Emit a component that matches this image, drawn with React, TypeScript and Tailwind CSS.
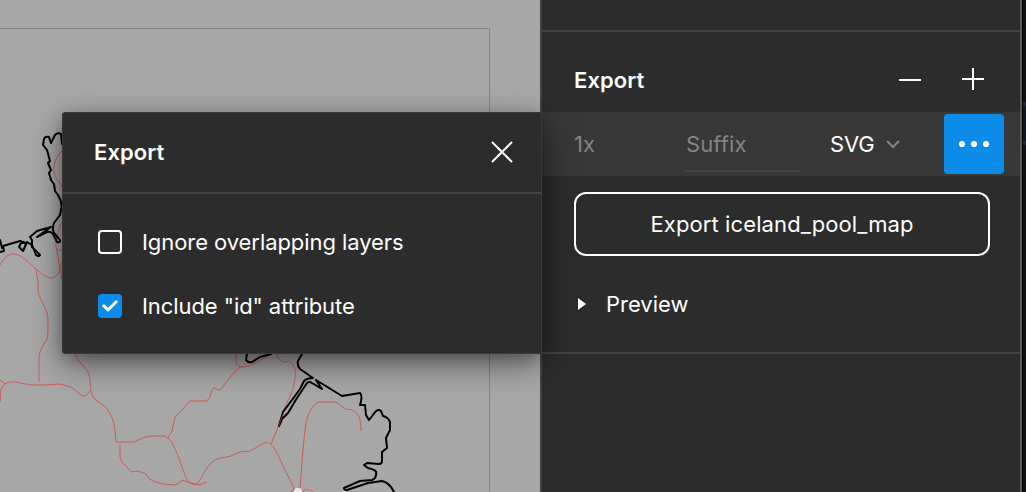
import React from "react";

const roads = [
  "M0 265C5 257 7 255 12 254C22 254 29 263 36 269C43 275 45 277 51 278C57 278 60 271 62 262",
  "M62 151C56 157 53 163 54 173C55 178 60 182 62 187",
  "M62 222C58 231 56 237 56 246L59 263L62 280",
  "M57 250H62",
  "M36 269L38 281V290C38 297 47 308 48 318C48 333 48 338 46 341C41 348 40 351 39 357V382",
  "M0 402L1 390Q2 386 5 384L0 380M5 384C8 382 14 381 20 383L32 385H45L60 384L71 387C77 391 80 396 84 396Q87 396 88 393L90 391",
  "M75 354Q76 358 79 361L87 370C91 378 90 385 91 391Q92 397 96 400L104 406Q107 408 109 412C115 421 115 433 116 442H134L143 438Q148 436 153 436H165L170 440C179 452 184 478 189 482Q196 488 200 480C205 471 211 458 222 458L231 456L240 452L250 451L264 443C269 441 273 446 277 453L286 472L294 488",
  "M168 438L172 431L175 417Q178 413 182 410L190 401H206Q210 399 210 396Q213 385 216 389Q221 392 224 385L231 376L240 367Q250 367 257 362L270 355",
  "M120 445V457Q122 464 125 465L131 472Q136 471 138 471L146 474Q149 480 153 481L163 484L175 485Q180 484 182 480L188 482L199 485L204 483L207 482",
  "M236 354V362Q237 366 241 367",
  "M277 354Q279 361 284 362L289 361C298 366 296 378 292 392L284 409L277 430L271 444",
  "M300 488L303 450L305 429C307 415 311 405 319 402H335Q339 403 341 406Q345 410 352 410C359 413 361 419 361 431",
  "M291 492L294 488M301 492C307 488 310 490 313 492",
];
const coast = [
  "M62 144L61 134Q58 132 55 135L51 143L49 137Q45 136 44 139L43 145L47 150L50 161L48 163L51 170L49 173L51 180L54 184L55 191L58 195Q63 203 61 210L60 215L54 223Q52 229 54 233L60 240Q61 243 57 242L53 234Q51 231 47 232L37 237L51 227L37 231L30 237L32 240V247L40 255Q39 257 36 255L32 245L27 242L23 251L19 247L21 243L26 243L20 241L3 246L4 251L0 252M0 240L2 248",
  "M247 354L246 360Q248 363 252 362L260 357L271 354",
  "M302 354L298 361Q297 366 300 369L313 378Q307 378 304 381L300 389L292 400L283 412L279 426L282 419L288 413L297 398L307 383Q309 381 312 383L322 389L316 380L342 396L360 393Q363 396 360 405L365 405L366 415L369 420L376 411Q379 409 381 411L383 416Q388 417 390 422V430L386 438L387 448L382 452V461Q382 464 379 464L367 463L364 465L368 468Q376 470 376 472Q377 478 372 480L360 481L344 488Q344 491 347 490L368 483L382 481Q390 483 394 492",
];

function Map() {
  return (
    <svg className="block h-full w-full" viewBox="0 0 540 492" fill="none">
      <path d="M0 28.5H489.5V492" stroke="#858585" />
      {roads.map((d) => <path key={d} d={d} stroke="#d35053" strokeWidth="0.9" strokeLinejoin="round" />)}
      {coast.map((d) => <path key={d} d={d} stroke="#000" strokeWidth="2" strokeLinejoin="round" strokeLinecap="round" />)}
      <path d="M279 426L281 419L284 412" stroke="#cf3234" strokeWidth="0.7" />
      <circle cx="298" cy="492" r="4" fill="#e6e6e6" />
      <circle cx="344" cy="493" r="2.5" fill="#d8d8d8" />
    </svg>
  );
}

export default function App() {
  return (
    <main className="relative flex h-[492px] w-[1026px] overflow-hidden bg-[#101010] font-['Inter',sans-serif] text-[22px] leading-8 tracking-[0.11px] text-white">
      <section className="h-full w-[540px] shrink-0 bg-[#a8a8a8]"><Map /></section>
      <aside className="flex h-full w-[482px] shrink-0 flex-col border-x-2 border-l-[#444] border-r-[#5a5a5a] bg-[#2c2c2c]">
        <div className="h-8 shrink-0 border-b-2 border-[#444]" />
        <header className="flex h-20 shrink-0 items-center justify-between pt-4 pr-9 pl-8">
          <h2 className="font-semibold tracking-[0.08px]">Export</h2>
          <svg className="h-6 w-[86px]" viewBox="0 0 86 24" stroke="white" strokeWidth="2">
            <path d="M1 12H23M64 11H86M75 0V22" />
          </svg>
        </header>
        <div className="flex h-16 shrink-0 items-center bg-[#383838] pl-8 text-[#848484]">
          <span className="w-[110px]">1x</span>
          <div className="flex h-full w-[116px] items-center">
            <span className="flex h-[56px] w-full items-center border-b-2 border-[#444] pt-0.5 pl-0.5">Suffix</span>
          </div>
          <div className="flex w-[144px] items-center pl-[30px] text-white">
            <span className="w-[56px] tracking-[-0.1px]">SVG</span>
            <svg className="h-4 w-4" viewBox="0 0 16 16" fill="none" stroke="#858585" strokeWidth="2"><path d="M1 5L7 11L13 5" /></svg>
          </div>
          <button className="flex h-[60px] w-[60px] items-center justify-center rounded-[4px] bg-[#0c8ce9]" aria-label="More options">
            <svg className="h-8 w-8" viewBox="0 0 32 32" fill="white"><circle cx="4" cy="16" r="3.1" /><circle cx="16" cy="16" r="3.1" /><circle cx="28" cy="16" r="3.1" /></svg>
          </button>
        </div>
        <div className="h-44 shrink-0 pt-4 pr-[30px] pl-8">
          <button className="flex h-16 w-[416px] items-center justify-center rounded-xl border-2 border-white">Export iceland_pool_map</button>
          <div className="mt-8 flex items-center">
            <svg className="ml-1 h-3 w-7" viewBox="0 0 28 12" fill="white"><path d="M0 0L8 6L0 12Z" /></svg>
            <span className="tracking-[0]">Preview</span>
          </div>
        </div>
        <div className="h-0.5 shrink-0 bg-[#444]" />
      </aside>
      <div className="h-full w-px bg-black" />
      <div className="flex h-full flex-1 flex-col bg-[#101010] pt-[102px]"><div className="h-[43px] border-y-4 border-[#202835] bg-[#111720]" /></div>
      <div role="dialog" className="absolute top-[112px] left-[62px] h-[242px] w-[480px] rounded-[4px] bg-[#2c2c2c] shadow-[0_10px_32px_rgba(0,0,0,0.5),0_4px_14px_rgba(0,0,0,0.15),inset_0_0_0_1px_#393939]">
        <header className="flex h-[82px] items-center justify-between border-b-2 border-[#444] pr-7 pl-8">
          <h2 className="font-semibold tracking-[0.08px]">Export</h2>
          <svg className="h-6 w-6" viewBox="0 0 24 24" stroke="white" strokeWidth="2"><path d="M2 2L22 22M22 2L2 22" /></svg>
        </header>
        <div className="flex flex-col gap-8 pt-8 pl-9 tracking-[-0.07px]">
          <label className="flex items-center gap-5"><span className="h-6 w-6 rounded-[4px] border-2 border-white" />Ignore overlapping layers</label>
          <label className="flex items-center gap-5">
            <span className="flex h-6 w-6 items-center justify-center rounded-[4px] bg-[#0c8ce9]"><svg className="h-6 w-6" viewBox="0 0 24 24" fill="none" stroke="white" strokeWidth="3"><path d="M5 11L10 16L19 7" /></svg></span>
            Include "id" attribute
          </label>
        </div>
      </div>
    </main>
  );
}
